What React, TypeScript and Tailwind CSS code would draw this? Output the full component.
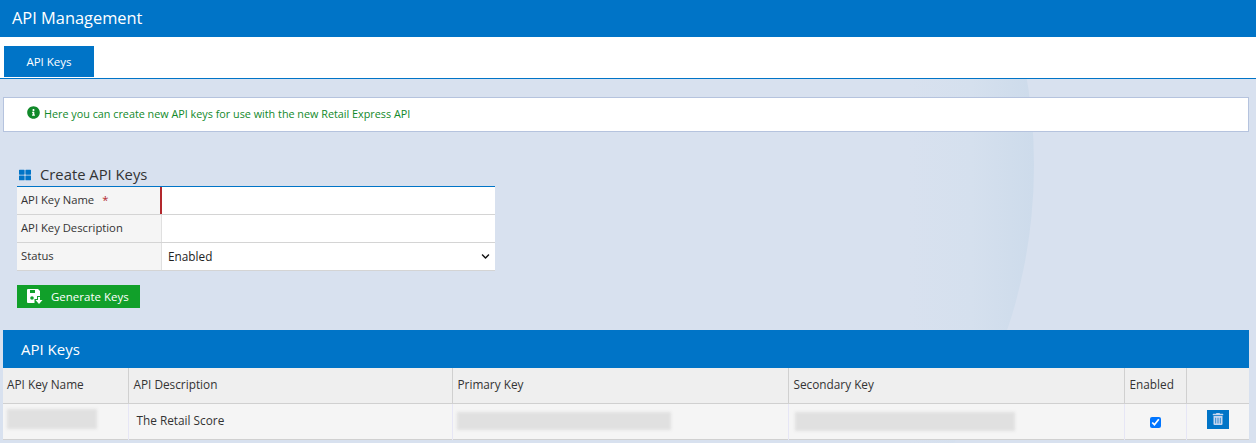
import { FaChevronDown, FaInfoCircle, FaThLarge, FaTrashAlt } from "react-icons/fa";

function SaveIcon() {
  return (
    <svg width="16" height="15" viewBox="0 0 16 15" className="shrink-0">
      <path fill="#fff" d="M1 0h10l2 2v5h-3v3H7.500v4H1a1 1 0 0 1-1-1V1a1 1 0 0 1 1-1z" />
      <rect x="3" y="1" width="5" height="3" fill="#11a02a" />
      <circle cx="5" cy="9" r="1.800" fill="#11a02a" />
      <path fill="#fff" d="M11 8h2v3h2.500L12 15l-3.500-4H11z" />
    </svg>
  );
}

function FormRow({ label, required, first, children }: { label: string; required?: boolean; first?: boolean; children?: React.ReactNode }) {
  return (
    <div className="flex h-[28px] border-b border-[#d4d4d4]">
      <div className="w-[145px] bg-[#f5f5f5] pl-1 flex items-center text-[11.250px] text-[#333] border-r border-[#e0e0e0]">
        {label}
        {required && <span className="ml-2 text-[#b3282d]">*</span>}
      </div>
      <div className={`relative flex-1 bg-white flex items-center ${first ? "border-l-2 border-[#b3282d] -ml-[2px]" : ""}`}>
        {children}
      </div>
    </div>
  );
}

function Blur({ className }: { className: string }) {
  return <div className={`bg-[#e0e0e0] blur-[1.500px] ${className}`} />;
}

export default function App() {
  return (
    <div className="relative h-[443px] overflow-hidden bg-[#d8e1ef] font-['Open_Sans',sans-serif] text-[#333]">
      <div className="absolute left-[-12px] top-[-358px] w-[1046px] h-[1046px] rounded-full bg-[linear-gradient(90deg,transparent_88%,#d5e0ee_94%,#cddbeb_100%)]" />

      <div className="relative">
        <header className="h-[37px] bg-[#0074c7] pl-3 flex items-center text-white text-[16.400px]">API Management</header>

        <div className="h-[42px] bg-white border-b border-[#0074c7] pt-[9px] pl-1">
          <div className="w-[90px] h-[31px] bg-[#0074c7] text-white text-[11.500px] flex items-center justify-center">API Keys</div>
        </div>

        <div className="mx-[3px] w-[1246px] h-[35px] mt-[18px] bg-white border border-[#b5c3de] pl-[23px] flex items-center gap-[4px] text-[10.800px] text-[#11892a]">
          <FaInfoCircle size={13} color="#11892a" className="-mt-1" />
          Here you can create new API keys for use with the new Retail Express API
        </div>

        <section className="ml-[17px] w-[478px] mt-[31px]">
          <div className="h-[23px] flex items-center gap-[9px] pl-[2px] text-[14.800px] text-[#333]">
            <FaThLarge size={12} color="#0074c7" />
            Create API Keys
          </div>
          <div className="border-t border-[#0074c7]">
            <FormRow label="API Key Name" required first />
            <FormRow label="API Key Description" />
            <FormRow label="Status">
              <select className="appearance-none w-full h-full pl-[6px] text-[11.800px] text-[#222] bg-white outline-none">
                <option>Enabled</option>
              </select>
              <FaChevronDown size={9} color="#111" className="absolute right-[5px] top-[9px] pointer-events-none" />
            </FormRow>
          </div>
          <button className="mt-[14px] w-[123px] h-[23px] bg-[#11a02a] text-white text-[11.500px] flex items-center pl-[10px] gap-[8px]">
            <SaveIcon />
            Generate Keys
          </button>
        </section>

        <section className="mx-[3px] w-[1246px] mt-[22px]">
          <div className="h-[38px] bg-[#0074c7] pl-[18px] flex items-center text-white text-[15px]">API Keys</div>
          <table className="w-full table-fixed border-collapse text-[11.800px]">
            <thead>
              <tr className="h-[35px] bg-[#efefef] border-b border-[#d0d0d0]">
                <th className="w-[125px] pl-1 text-left font-normal border-r border-[#d0d0d0]">API Key Name</th>
                <th className="w-[324px] pl-[5px] text-left font-normal border-r border-[#d0d0d0]">API Description</th>
                <th className="w-[336px] pl-[5px] text-left font-normal border-r border-[#d0d0d0]">Primary Key</th>
                <th className="w-[336px] pl-[5px] text-left font-normal border-r border-[#d0d0d0]">Secondary Key</th>
                <th className="w-[62px] pl-[5px] text-left font-normal border-r border-[#d0d0d0]">Enabled</th>
                <th className="font-normal"></th>
              </tr>
            </thead>
            <tbody>
              <tr className="h-[36px] bg-[#f5f5f5] border-b border-[#d0d0d0]">
                <td className="pl-1 border-r border-[#e6e6f5]">
                  <Blur className="w-[90px] h-[20px] -mt-1" />
                </td>
                <td className="pl-[8px] border-r border-[#e6e6f5]">The Retail Score</td>
                <td className="pl-[4px] border-r border-[#e6e6f5]">
                  <Blur className="w-[214px] h-[18px]" />
                </td>
                <td className="pl-[6px] border-r border-[#e6e6f5]">
                  <Blur className="w-[220px] h-[19px]" />
                </td>
                <td className="border-r border-[#e6e6f5] text-center">
                  <input type="checkbox" defaultChecked className="w-[11px] h-[11px] align-middle accent-[#0075ff]" />
                </td>
                <td>
                  <div className="ml-[20px] -mt-1 w-[22px] h-[19px] bg-[#0074c7] flex items-center justify-center">
                    <FaTrashAlt size={12} color="#c7d6ee" />
                  </div>
                </td>
              </tr>
            </tbody>
          </table>
        </section>
      </div>
    </div>
  );
}
